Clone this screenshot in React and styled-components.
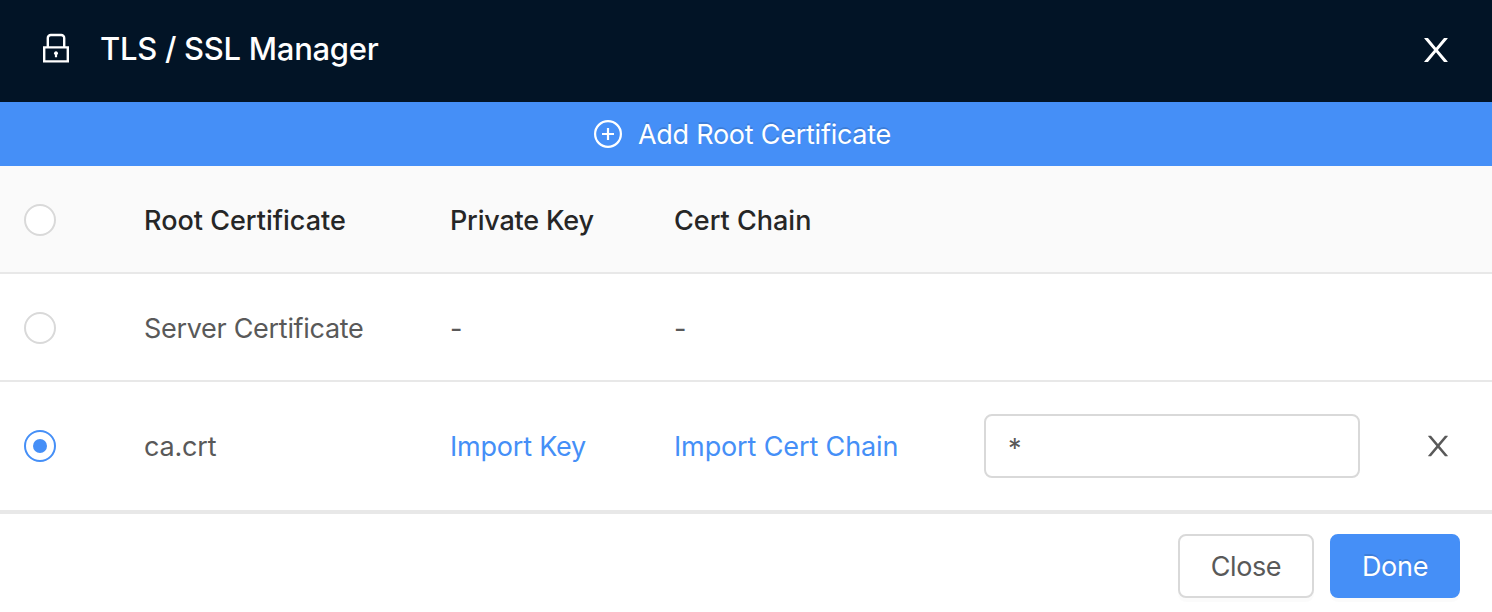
import React, { useState } from "react";
import styled, { createGlobalStyle } from "styled-components";

const GlobalStyle = createGlobalStyle`
  *, *::before, *::after { box-sizing: border-box; }
  body {
    margin: 0;
    background: #fff;
    color: #595959;
    font-family: Inter, "Liberation Sans", sans-serif;
    font-size: 27px;
    -webkit-font-smoothing: antialiased;
  }
  button, input { font: inherit; color: inherit; letter-spacing: inherit; }
`;

const Modal = styled.div`
  width: 1492px;
  height: 612px;
  display: flex;
  flex-direction: column;
  background: #fff;
  overflow: hidden;
`;

const Header = styled.header`
  height: 102px;
  flex: none;
  display: flex;
  align-items: center;
  padding: 0 37px 4px;
  background: #021426;
  color: #fff;
`;

const Title = styled.h1`
  margin: 0 auto 0 25px;
  font-size: 31px;
  font-weight: 500;
  line-height: 40px;
  letter-spacing: -0.28px;
`;

const Icon = styled.svg`
  display: block;
  flex: none;
  fill: currentColor;
`;

const IconButton = styled.button`
  display: flex;
  padding: 0;
  border: 0;
  background: none;
  cursor: pointer;
`;

const DismissButton = styled(IconButton)`
  padding-top: 2px;
`;

const AddBar = styled.button`
  height: 64px;
  flex: none;
  display: flex;
  align-items: center;
  justify-content: center;
  gap: 16px;
  padding: 0 7px 0 0;
  border: 0;
  background: #458ff7;
  color: #fff;
  text-shadow: 0 -2px 0 rgba(0, 0, 0, 0.12);
  cursor: pointer;
`;

const Row = styled.div`
  display: grid;
  grid-template-columns: 120px 306px 224px 310px 376px 1fr;
  align-items: center;
  flex: none;
  height: ${(p) => p.$height}px;
  padding: ${(p) => p.$top || 0}px 38px 0 24px;
  border-bottom: ${(p) => p.$rule || 2}px solid #e8e8e8;
  background: ${(p) => (p.$head ? "#fafafa" : "#fff")};
  color: ${(p) => (p.$head ? "#262626" : "#595959")};
  font-weight: ${(p) => (p.$head ? 500 : 400)};
`;

const Label = styled.span`
  padding-top: 2px;
  line-height: 42px;
  white-space: nowrap;
  letter-spacing: ${(p) => p.$spacing || 0}px;
`;

const Link = styled(Label).attrs({ as: "a" })`
  color: #458ff7;
  cursor: pointer;
`;

const Radio = styled.button`
  width: 32px;
  height: 32px;
  display: grid;
  place-items: center;
  padding: 0;
  border: 2px solid ${(p) => (p.$checked ? "#458ff7" : "#d9d9d9")};
  border-radius: 50%;
  background: #fff;
  cursor: pointer;

  &::after {
    content: "";
    width: 14px;
    height: 14px;
    border-radius: 50%;
    background: ${(p) => (p.$checked ? "#458ff7" : "transparent")};
  }
`;

const HostInput = styled.input`
  width: 376px;
  height: 64px;
  padding: 4px 22px 0;
  border: 2px solid #d9d9d9;
  border-radius: 8px;
  background: #fff;
  outline: none;
`;

const Remove = styled(IconButton)`
  justify-self: end;
`;

const Footer = styled.footer`
  display: flex;
  justify-content: flex-end;
  gap: 16px;
  padding: 20px 32px 0;
`;

const Button = styled.button`
  display: flex;
  align-items: center;
  justify-content: center;
  width: ${(p) => p.$width}px;
  height: 64px;
  padding: 0;
  border: 2px solid ${(p) => (p.$primary ? "#458ff7" : "#d9d9d9")};
  border-radius: 8px;
  background: ${(p) => (p.$primary ? "#458ff7" : "#fff")};
  color: ${(p) => (p.$primary ? "#fff" : "#595959")};
  text-shadow: ${(p) => (p.$primary ? "0 -2px 0 rgba(0, 0, 0, 0.12)" : "none")};
  box-shadow: 0 4px 0 rgba(0, 0, 0, 0.016);
  cursor: pointer;
`;

const LockIcon = () => (
  <Icon width="38" height="38" viewBox="0 0 38 38">
    <path
      d="M10.8 17V8a3 3 0 0 1 3-3h10.4a3 3 0 0 1 3 3V17M7.2 17.4h23.6v14H7.2z"
      fill="none"
      stroke="currentColor"
      strokeWidth="2.4"
    />
    <path d="M17.9 27.2V25a2 2 0 1 1 2.2 0v2.2z" />
  </Icon>
);

const CloseIcon = ({ size }) => (
  <Icon width={size} height={size} viewBox="0 0 1024 1024">
    <path d="M563.8 512l262.5-312.9c4.4-5.2.7-13.1-6.1-13.1h-79.8c-4.7 0-9.2 2.1-12.3 5.7L511.6 449.8 295.1 191.7c-3-3.6-7.5-5.7-12.3-5.7H203c-6.8 0-10.5 7.9-6.1 13.1L459.4 512 196.9 824.9A7.95 7.95 0 0 0 203 838h79.8c4.7 0 9.2-2.1 12.3-5.7l216.5-258.1 216.5 258.1c3 3.6 7.5 5.7 12.3 5.7h79.8c6.8 0 10.5-7.9 6.1-13.1L563.8 512z" />
  </Icon>
);

const PlusCircleIcon = () => (
  <Icon width="28" height="28" viewBox="0 0 28 28">
    <circle cx="14" cy="14" r="12.9" fill="none" stroke="currentColor" strokeWidth="2.2" />
    <path d="M12.9 8h2.2v4.9H20v2.2h-4.900V20h-2.200v-4.900H8v-2.200h4.900z" />
  </Icon>
);

export default function App() {
  const [selected, setSelected] = useState("ca");
  const [host, setHost] = useState("*");
  const radio = (id, label) => (
    <Radio
      role="radio"
      aria-label={label}
      aria-checked={selected === id}
      $checked={selected === id}
      onClick={() => setSelected(id)}
    />
  );

  return (
    <>
      <GlobalStyle />
      <Modal>
        <Header>
          <LockIcon />
          <Title>TLS / SSL Manager</Title>
          <DismissButton aria-label="Close dialog">
            <CloseIcon size={38} />
          </DismissButton>
        </Header>
        <AddBar>
          <PlusCircleIcon />
          <Label $spacing={-0.25}>Add Root Certificate</Label>
        </AddBar>
        <Row $head $height={108} $top={2}>
          {radio("none", "No certificate")}
          <Label>Root Certificate</Label>
          <Label $spacing={-0.2}>Private Key</Label>
          <Label>Cert Chain</Label>
        </Row>
        <Row $height={108} $top={2}>
          {radio("server", "Server certificate")}
          <Label $spacing={-0.3}>Server Certificate</Label>
          <Label>-</Label>
          <Label>-</Label>
        </Row>
        <Row $height={132} $rule={4}>
          {radio("ca", "ca.crt")}
          <Label $spacing={-0.2}>ca.crt</Label>
          <Link $spacing={-0.2}>Import Key</Link>
          <Link $spacing={-0.13}>Import Cert Chain</Link>
          <HostInput value={host} aria-label="Host" onChange={(e) => setHost(e.target.value)} />
          <Remove aria-label="Remove certificate">
            <CloseIcon size={32} />
          </Remove>
        </Row>
        <Footer>
          <Button $width={136}>
            <Label $spacing={-0.4}>Close</Label>
          </Button>
          <Button $primary $width={130}>
            <Label $spacing={-0.3}>Done</Label>
          </Button>
        </Footer>
      </Modal>
    </>
  );
}
